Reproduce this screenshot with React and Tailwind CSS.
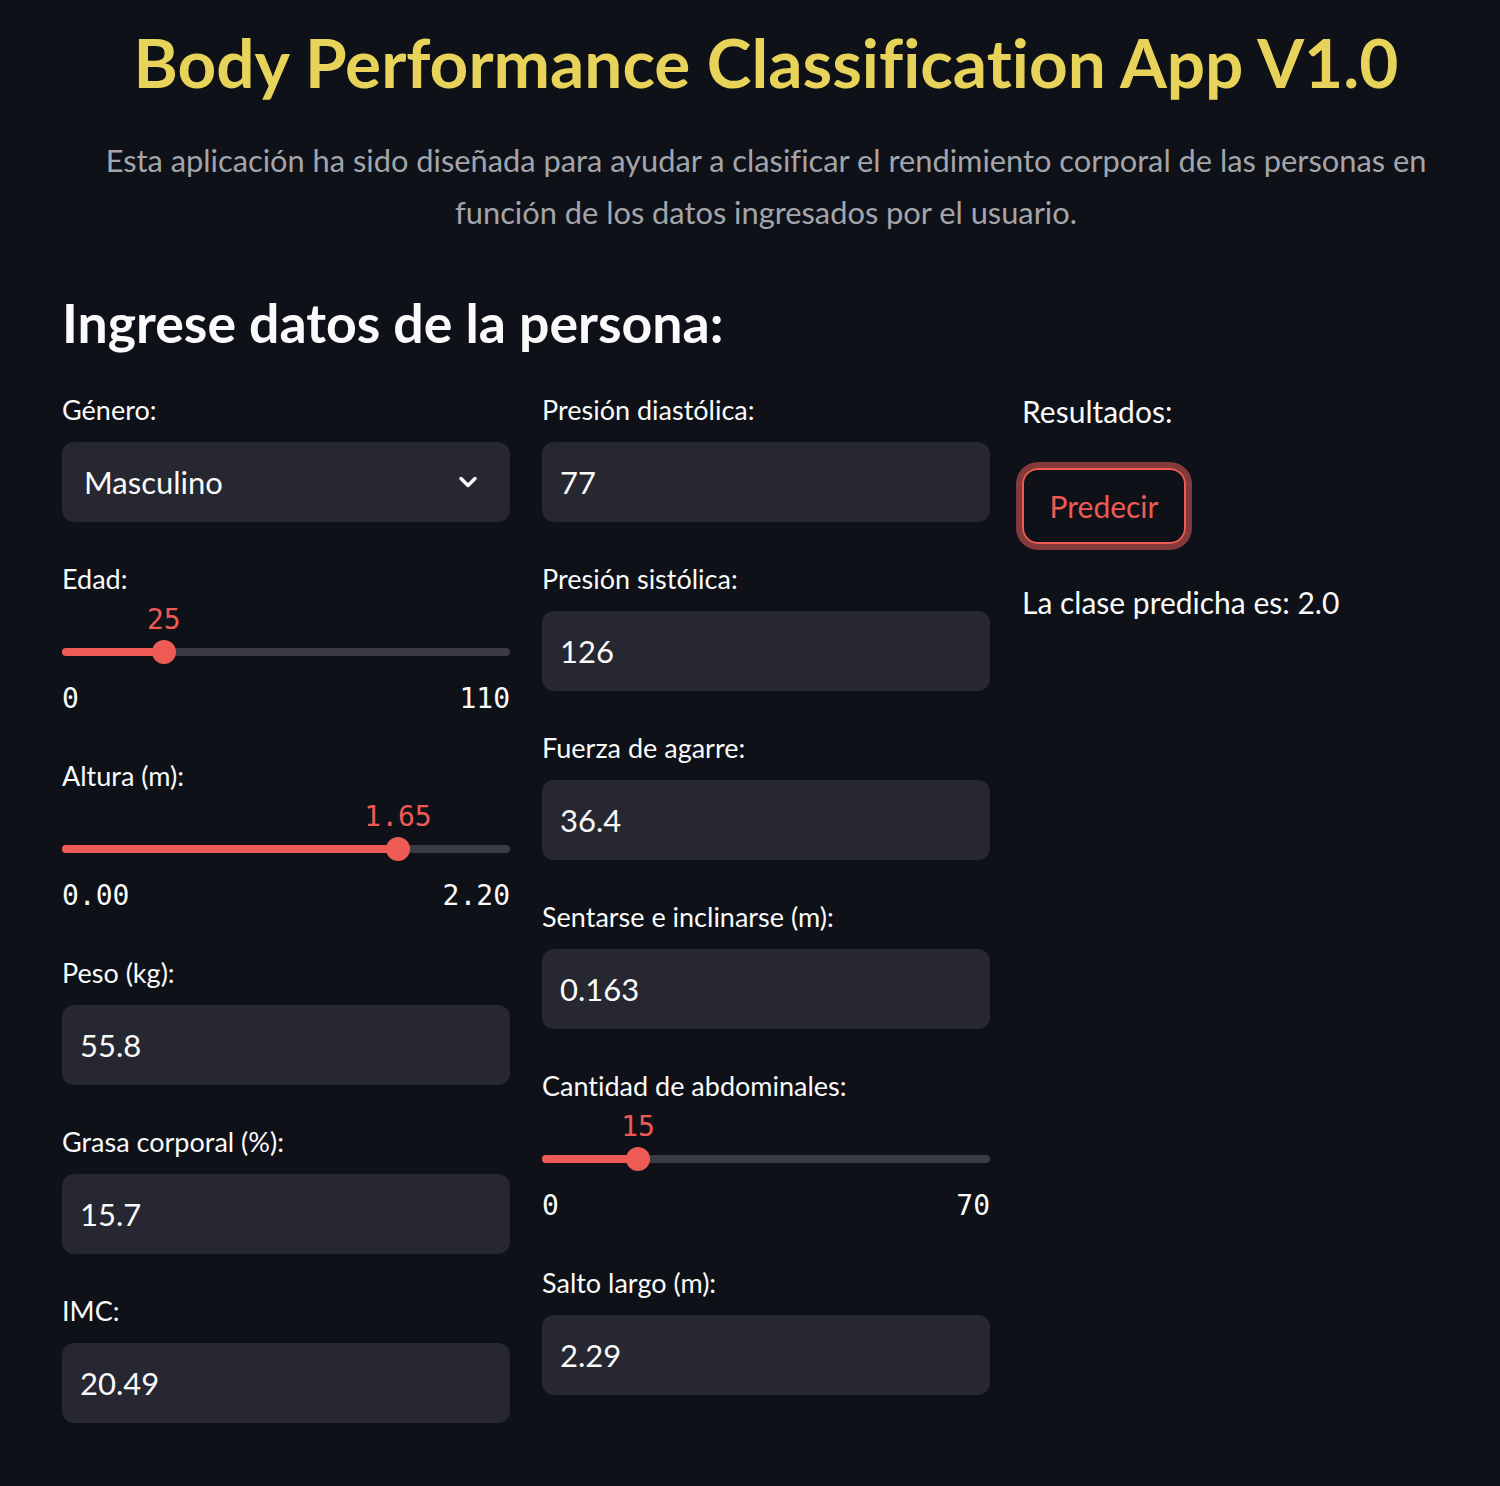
import React from 'react';
import { ChevronDown } from 'lucide-react';

const sans = { fontFamily: "'Lato', 'Noto Sans', sans-serif" };
const mono = { fontFamily: "'DejaVu Sans Mono', 'Liberation Mono', monospace" };

const Label = ({ children }) => (
  <div className="h-[40px] flex items-center text-[27px] text-[#fafafa]">{children}</div>
);

const NumberField = ({ label, value }) => (
  <div className="flex flex-col">
    <Label>{label}</Label>
    <div className="mt-[12px] h-[80px] rounded-[12px] bg-[#262730] flex items-center px-[18px] text-[31px] text-[#fafafa]">
      {value}
    </div>
  </div>
);

const SelectField = ({ label, value }) => (
  <div className="flex flex-col">
    <Label>{label}</Label>
    <div className="mt-[12px] h-[80px] rounded-[12px] bg-[#262730] flex items-center justify-between pl-[22px] pr-[28px] text-[31px] text-[#fafafa]">
      <span>{value}</span>
      <ChevronDown size={28} strokeWidth={3} color="#fafafa" />
    </div>
  </div>
);

const SliderField = ({ label, value, min, max, display, minLabel, maxLabel }) => {
  const pct = ((value - min) / (max - min)) * 100;
  return (
    <div className="flex flex-col h-[160px]">
      <Label>{label}</Label>
      <div className="relative mt-[6px] h-[30px]">
        <span
          className="absolute top-0 -translate-x-1/2 text-[28px] leading-[30px] text-[#ee5a54]"
          style={{ ...mono, left: `${pct}%` }}
        >
          {display}
        </span>
      </div>
      <div className="relative mt-[5px] h-[24px] flex items-center">
        <div className="w-full h-[8px] rounded-full bg-[#3a3b44]">
          <div className="h-full rounded-full bg-[#ee5a54]" style={{ width: `${pct}%` }} />
        </div>
        <div
          className="absolute top-0 w-[24px] h-[24px] -translate-x-1/2 rounded-full bg-[#ee5a54]"
          style={{ left: `${pct}%` }}
        />
      </div>
      <div className="mt-[20px] h-[30px] flex justify-between text-[28px] leading-[30px] text-[#fafafa]" style={mono}>
        <span>{minLabel}</span>
        <span>{maxLabel}</span>
      </div>
    </div>
  );
};

const App = () => {
  return (
    <div
      className="min-h-screen w-full bg-[#0e1117] pl-[62px] pr-[30px] pb-[40px] [font-variant-ligatures:none]"
      style={sans}
    >
      <h1 className="pt-[12px] text-center text-[67.5px] leading-[100px] font-bold text-[#e8d35a] whitespace-nowrap">
        Body Performance Classification App V1.0
      </h1>
      <p className="mt-[23px] text-center text-[30.8px] leading-[52px] text-[#a3a5ab]">
        Esta aplicación ha sido diseñada para ayudar a clasificar el rendimiento corporal de las personas en
        <br />
        función de los datos ingresados por el usuario.
      </p>
      <h2 className="mt-[43px] text-[53.6px] leading-[80px] font-bold text-[#fafafa]">
        Ingrese datos de la persona:
      </h2>

      <div className="mt-[28px] grid grid-cols-3 gap-x-[32px]">
        <div className="flex flex-col gap-[37px]">
          <SelectField label="Género:" value="Masculino" />
          <SliderField label="Edad:" value={25} min={0} max={110} display="25" minLabel="0" maxLabel="110" />
          <SliderField label="Altura (m):" value={1.65} min={0} max={2.2} display="1.65" minLabel="0.00" maxLabel="2.20" />
          <NumberField label="Peso (kg):" value="55.8" />
          <NumberField label="Grasa corporal (%):" value="15.7" />
          <NumberField label="IMC:" value="20.49" />
        </div>

        <div className="flex flex-col gap-[37px]">
          <NumberField label="Presión diastólica:" value="77" />
          <NumberField label="Presión sistólica:" value="126" />
          <NumberField label="Fuerza de agarre:" value="36.4" />
          <NumberField label="Sentarse e inclinarse (m):" value="0.163" />
          <SliderField label="Cantidad de abdominales:" value={15} min={0} max={70} display="15" minLabel="0" maxLabel="70" />
          <NumberField label="Salto largo (m):" value="2.29" />
        </div>

        <div className="flex flex-col items-start">
          <div className="h-[40px] mt-[1px] flex items-center text-[30px] text-[#fafafa]">Resultados:</div>
          <button className="mt-[37px] h-[76px] w-[164px] rounded-[16px] border-2 border-[#ee5a54] shadow-[0_0_0_6px_#84393b] text-[30px] text-[#ee5a54]">
            Predecir
          </button>
          <div className="mt-[38px] h-[40px] flex items-center text-[30px] text-[#fafafa]">
            La clase predicha es: 2.0
          </div>
        </div>
      </div>
    </div>
  );
};

export default App;
